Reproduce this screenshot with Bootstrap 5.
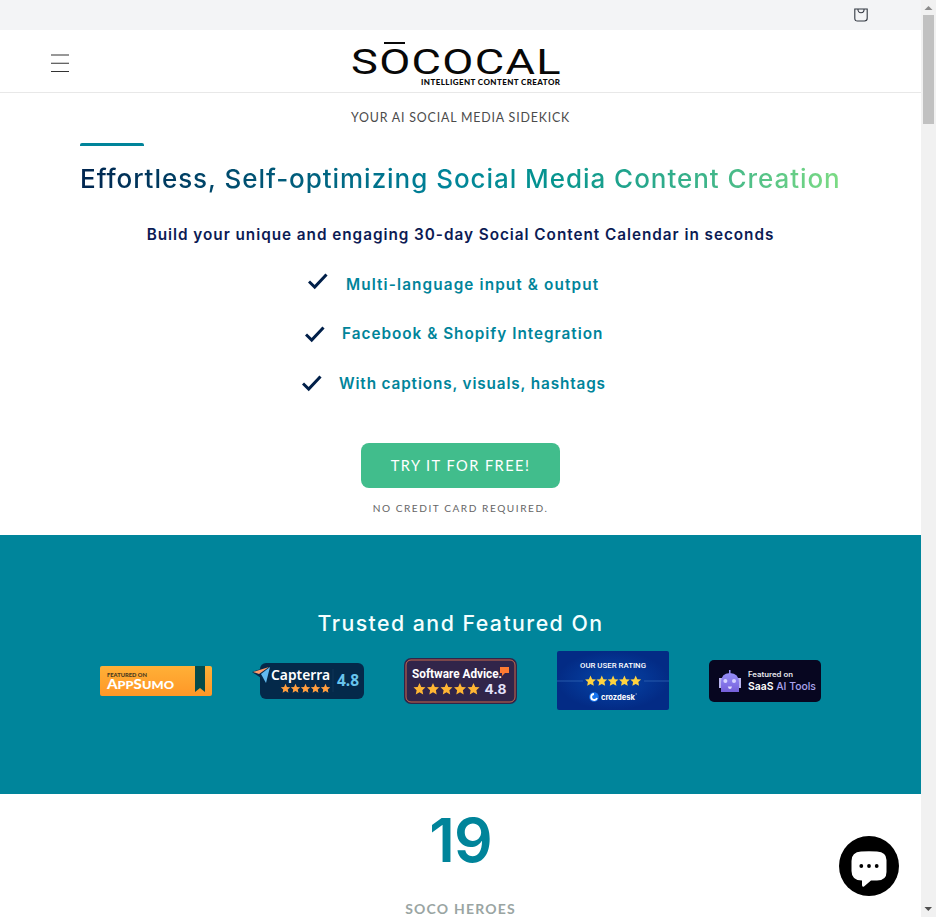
<!DOCTYPE html>
<html lang="en">
<head>
<meta charset="utf-8">
<meta name="viewport" content="width=device-width, initial-scale=1">
<title>Sococal</title>
<link href="https://cdn.jsdelivr.net/npm/bootstrap@5.3.0/dist/css/bootstrap.min.css" rel="stylesheet">
<style>
html,body{height:917px;overflow:hidden}
body{font-family:Inter,"Open Sans",sans-serif;background:#fff;color:#505050}
p,h1,h2,h3,ul{margin:0;white-space:nowrap}
svg{display:block;flex:none}
.page-col{width:921px;height:917px}
.topbar{height:30px;background:#f3f4f6;padding-right:53px}
.site-head{height:63px;border-bottom:1px solid #e8e8e8;padding:0 51px}
.brand-logo{margin-left:282px}
.kicker{font:400 12.4px/20px Lato,sans-serif;letter-spacing:.82px;margin-top:15px;color:#4b4b4b}
.accent{width:64px;height:3px;background:#00849a;border-radius:2px 2px 0 0;margin:15px 0 0 80px}
.headline{font-size:26px;line-height:36px;font-weight:500;letter-spacing:.95px;margin:15px 0 0 80px;width:762px;color:transparent;background:linear-gradient(90deg,#00254f 0%,#00849a 48%,#05948f 62%,#46b989 85%,#7ddc84 100%);-webkit-background-clip:text;background-clip:text}
.lede{font-size:15.3px;line-height:24px;font-weight:600;letter-spacing:.97px;color:#0c1b54;margin-top:26px}
.feature{height:24px;font-size:15.3px;line-height:24px;font-weight:600;color:#00849a}
.features{margin-top:26px;gap:25.5px}
.feat-a{padding-left:308px;gap:18px;letter-spacing:1.13px}
.feat-b{padding-left:305px;gap:17px;letter-spacing:1px}
.feat-b span{margin-top:-1px}
.feat-c{padding-left:302px;gap:17px;letter-spacing:.87px}
.feat-a svg{margin-top:-1px}
.feat-b svg,.feat-c svg{margin-top:2px}
.cta{width:199px;height:45px;border-radius:8px;background:#41bd8c;color:#fff;font:400 14.6px/45px Lato,sans-serif;letter-spacing:1.45px;padding:0;border:0;margin-top:47px}
.cta:hover{background:#39ac7f;color:#fff}
.fineprint{font:400 10.1px/16px Lato,sans-serif;letter-spacing:1.55px;margin-top:12px;color:#666}
.hero{height:442px}
.trusted{height:259px;background:#00859b;padding-top:73px}
.trusted h2{font-size:21.3px;line-height:30px;font-weight:500;letter-spacing:1.46px;color:#f4ffff}
.badges{height:60px;margin-top:13px;gap:40px}
.badge-tall{margin-top:-1px}
.count{font-size:60.5px;line-height:80px;font-weight:600;color:#00849a;margin-top:6px;letter-spacing:-1px}
.count-label{font:700 14px/20px Lato,sans-serif;letter-spacing:1.2px;color:#9aa5a3;margin-top:19px}
.scroll-rail{width:15px;height:917px;background:#f1f1f1}
.chat{position:absolute;left:839px;top:836px}
</style>
</head>
<body>
<svg width="0" height="0" class="position-absolute"><defs>
<path id="star" d="M0-5 1.5-1.7 5-1.4 2.4 1 3.1 4.5 0 2.7-3.1 4.5-2.4 1-5-1.4-1.5-1.7Z"/>
<linearGradient id="orange" x2="0" y2="1"><stop stop-color="#ffb037"/><stop offset="1" stop-color="#ff9727"/></linearGradient>
<radialGradient id="blue"><stop stop-color="#0646aa"/><stop offset="1" stop-color="#032b85"/></radialGradient>
<linearGradient id="bot" x2="0" y2="1"><stop stop-color="#9c96ff"/><stop offset="1" stop-color="#7560d9"/></linearGradient>
</defs></svg>
<div class="d-flex">
<main class="page-col">
  <div class="topbar d-flex align-items-center justify-content-end">
    <svg width="14" height="14" viewBox="0 0 14 14" fill="none" stroke="#333842" stroke-width="1.1"><path d="M.8 1H13.2V10.3Q13.2 13 10.5 13H3.5Q.8 13 .8 10.3ZM3.9 1C3.9 6 10.1 6 10.1 1"/></svg>
  </div>
  <header class="site-head d-flex align-items-start">
    <svg class="mt-4" width="18" height="18" viewBox="0 0 18 18" stroke="#333" stroke-width="1.1"><path d="M0 1H18M0 9.3H18M0 17.5H18"/></svg>
    <svg class="brand-logo" width="212" height="60" viewBox="0 0 212 60" font-family="Roboto,sans-serif" fill="#080808">
      <path d="M33 12H54V14H33Z"/>
      <text x="0" y="44" font-size="34.5" font-weight="400" letter-spacing="1" textLength="211" lengthAdjust="spacingAndGlyphs">SOCOCAL</text>
      <text x="70" y="55" font-family="Lato,sans-serif" font-size="8" font-weight="900" textLength="139">INTELLIGENT CONTENT CREATOR</text>
    </svg>
  </header>
  <section class="hero d-flex flex-column">
    <p class="kicker text-center">YOUR AI SOCIAL MEDIA SIDEKICK</p>
    <div class="accent"></div>
    <h1 class="headline">Effortless, Self-optimizing Social Media Content Creation</h1>
    <h2 class="lede text-center">Build your unique and engaging 30-day Social Content Calendar in seconds</h2>
    <ul class="features list-unstyled d-flex flex-column">
      <li class="feature feat-a d-flex"><svg width="20" height="18" viewBox="0 0 20 18" fill="none" stroke="#001f49" stroke-width="3"><path d="M1 9.5 6.7 15 18.5 2.5"/></svg><span>Multi-language input &amp; output</span></li>
      <li class="feature feat-b d-flex"><svg width="20" height="18" viewBox="0 0 20 18" fill="none" stroke="#001f49" stroke-width="3"><path d="M1 9.5 6.7 15 18.5 2.5"/></svg><span>Facebook &amp; Shopify Integration</span></li>
      <li class="feature feat-c d-flex"><svg width="20" height="18" viewBox="0 0 20 18" fill="none" stroke="#001f49" stroke-width="3"><path d="M1 9.5 6.7 15 18.5 2.5"/></svg><span>With captions, visuals, hashtags</span></li>
    </ul>
    <button class="btn cta align-self-center">TRY IT FOR FREE!</button>
    <p class="fineprint text-center">NO CREDIT CARD REQUIRED.</p>
  </section>
  <section class="trusted text-center">
    <h2>Trusted and Featured On</h2>
    <div class="badges d-flex justify-content-center align-items-center">
      <svg width="112" height="30" viewBox="0 0 112 30" font-family="Lato,sans-serif" font-weight="900"><rect width="112" height="30" rx="2" fill="url(#orange)"/><path d="M95 0H105V26L100 22 95 26Z" fill="#064b4a"/><text x="7" y="10.5" font-size="5.5" fill="#49391e" textLength="40" lengthAdjust="spacingAndGlyphs">FEATURED ON</text><text x="7" y="23" font-size="13" fill="#fff" textLength="67" lengthAdjust="spacingAndGlyphs">A<tspan font-size="11">PP</tspan>S<tspan font-size="11">UMO</tspan></text></svg>
      <svg width="112" height="38" viewBox="0 0 112 38" font-family="Noto Sans,sans-serif"><rect x="8" y="1" width="104" height="36" rx="6" fill="#04294a"/><path d="M0 10 18 4 15 22 9 16Z" fill="#04294a"/><path d="M1 10 17 5 7 12Z" fill="#ff9d6b"/><path d="M18 5 9 12 14 21Z" fill="#63baf0"/><path d="M81 7V30" stroke="#183e60" stroke-width=".6"/><text x="19" y="18" font-size="14.5" font-weight="600" fill="#fff" textLength="59" lengthAdjust="spacingAndGlyphs">Capterra</text><text x="85" y="24" font-size="15.5" font-weight="700" fill="#68c4ed" textLength="22" lengthAdjust="spacingAndGlyphs">4.8</text><g fill="#ff9e3e"><use href="#star" transform="translate(33.5 26.5) scale(.94)"/><use href="#star" transform="translate(43.5 26.5) scale(.94)"/><use href="#star" transform="translate(53.5 26.5) scale(.94)"/><use href="#star" transform="translate(63.5 26.5) scale(.94)"/><use href="#star" transform="translate(73.5 26.5) scale(.94)"/></g></svg>
      <svg width="113" height="46" viewBox="0 0 113 46" font-family="Roboto,sans-serif" font-weight="700"><rect width="113" height="46" rx="7" fill="#31254a"/><rect x="2" y="2" width="109" height="42" rx="5" fill="none" stroke="#c86a4b"/><text x="8" y="20" font-size="12.5" fill="#fff" textLength="90" lengthAdjust="spacingAndGlyphs">Software Advice.</text><path d="M96 9H105V15H101L98 18V15H96Z" fill="#ff7b32"/><g fill="#ffb634"><use href="#star" transform="translate(15.5 31) scale(1.2)"/><use href="#star" transform="translate(29 31) scale(1.2)"/><use href="#star" transform="translate(42.5 31) scale(1.2)"/><use href="#star" transform="translate(56 31) scale(1.2)"/><use href="#star" transform="translate(69.5 31) scale(1.2)"/></g><text x="80.5" y="35.5" font-family="Inter" font-size="12.5" fill="#e4e2fb" textLength="22" lengthAdjust="spacingAndGlyphs">4.8</text></svg>
      <svg class="badge-tall" width="112" height="59" viewBox="0 0 112 59" font-family="Roboto,sans-serif" font-weight="500" fill="#fff"><rect width="112" height="59" rx="2" fill="url(#blue)"/><path d="M0 30H26M87 30H112" stroke="#3165b4" stroke-width=".8"/><text x="23" y="16.5" font-size="7.8" textLength="66" lengthAdjust="spacingAndGlyphs">OUR USER RATING</text><g fill="#ffd33f"><use href="#star" transform="translate(33.5 30) scale(1.08)"/><use href="#star" transform="translate(44.8 30) scale(1.08)"/><use href="#star" transform="translate(56.1 30) scale(1.08)"/><use href="#star" transform="translate(67.4 30) scale(1.08)"/><use href="#star" transform="translate(78.7 30) scale(1.08)"/></g><circle cx="37" cy="46" r="4.8" fill="#1673ed"/><path d="M37 43A3 3 0 1 0 40 47" fill="none" stroke="#fff" stroke-width="1.8"/><text x="44" y="48.5" font-family="Inter" font-size="8" font-weight="700" textLength="34" lengthAdjust="spacingAndGlyphs">crozdesk</text><path d="M78.5 43H80" stroke="#fff" stroke-width=".6"/></svg>
      <svg width="112" height="42" viewBox="0 0 112 42" font-family="Inter,sans-serif"><rect width="112" height="42" rx="5" fill="#070620"/><path d="M10 18H13V28H10ZM29 18H32V28H29Z" fill="#b8b4ee"/><path d="M20 10H21.5V14H20ZM12 23Q12 13 20.8 13 30 13 30 23V32H12Z" fill="url(#bot)"/><circle cx="16.4" cy="21" r="2" fill="#d7d3ff"/><circle cx="25" cy="21" r="2" fill="#d7d3ff"/><path d="M18.8 26.5H23Q22.4 29 21 29 19.4 29 18.8 26.5" fill="#e0dcff"/><text x="39" y="16.5" font-size="7.3" font-weight="600" fill="#e7e7ed" textLength="45" lengthAdjust="spacingAndGlyphs">Featured on</text><text x="39" y="30.2" font-size="11" font-weight="600" fill="#fff" textLength="68" lengthAdjust="spacingAndGlyphs">SaaS <tspan fill="#aaa4ed" font-weight="500">AI Tools</tspan></text></svg>
    </div>
  </section>
  <section class="text-center">
    <p class="count">19</p>
    <p class="count-label">SOCO HEROES</p>
  </section>
</main>
<aside class="scroll-rail"><svg width="15" height="917" viewBox="0 0 15 917"><path d="M3.5 10 7.5 6 11.5 10Z" fill="#8b8b8b"/><path d="M2 15H13V124H2Z" fill="#c1c1c1"/><path d="M3.5 907 11 907 7.3 911Z" fill="#505050"/></svg></aside>
</div>
<svg class="chat" width="60" height="60" viewBox="0 0 60 60"><circle cx="30" cy="30" r="30"/><path d="M22 15.5Q30 14.8 38 15.5 47.5 16 47.5 24V36Q47.5 44.5 38 44.5H32L25 50.5Q23 51.5 23 49V44.5Q12.5 44.5 12.5 35V25Q12.5 16 22 15.5Z" fill="#fff"/><g fill="#000"><circle cx="22.3" cy="30" r="1.9"/><circle cx="30" cy="30" r="1.9"/><circle cx="37.7" cy="30" r="1.9"/></g></svg>
<script src="https://cdn.jsdelivr.net/npm/bootstrap@5.3.0/dist/js/bootstrap.bundle.min.js"></script>
</body>
</html>
